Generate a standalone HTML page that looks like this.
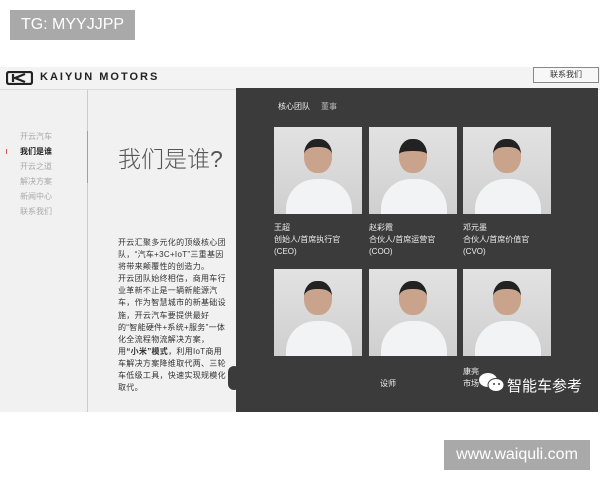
<!DOCTYPE html>
<html><head><meta charset="utf-8"><style>
*{margin:0;padding:0;box-sizing:border-box}
body{width:600px;height:480px;background:#fff;position:relative;overflow:hidden;font-family:"Liberation Sans","Noto Sans CJK SC",sans-serif}
.a{position:absolute}
.tg{left:10px;top:10px;width:125px;height:30px;background:#a9a9a9;color:#fff;font-size:16px;line-height:30px;text-align:center}
.wm{left:444px;top:440px;width:146px;height:30px;background:#a9a9a9;color:#fff;font-size:16px;line-height:30px;text-align:center}
.hdr{left:0;top:67px;width:600px;height:23px;background:#f3f3f3;border-bottom:1px solid #ddd}
.main{left:0;top:90px;width:236px;height:322px;background:#f1f1f1}
.dark{left:236px;top:88px;width:362px;height:324px;background:#3b3b3b}
.nav{left:20px;font-size:8px;color:#aaa}
.ph{width:88px;height:87px;background:linear-gradient(#e2e2e2,#cfcfcf);overflow:hidden}
.ph .h{position:absolute;left:30px;top:12px;width:28px;height:34px;border-radius:45%;background:#c9a38c;border-top:8px solid #222}
.ph .s{position:absolute;left:12px;top:52px;width:66px;height:45px;border-radius:30px 30px 0 0;background:#f2f3f4}
.t{font-size:8px;color:#eee;line-height:12px}
</style></head><body>
<div class="a tg">TG: MYYJJPP</div>
<div class="a hdr"></div>
<svg class="a" style="left:6px;top:71px" width="27" height="14" viewBox="0 0 27 14"><rect x="1" y="1" width="25" height="12" rx="2" fill="none" stroke="#222" stroke-width="2.2"/><path d="M7 3v8M19 3L9 7l10 4" fill="none" stroke="#222" stroke-width="2.2"/></svg>
<div class="a" style="left:40px;top:71px;font-size:11px;font-weight:bold;letter-spacing:2px;color:#222">KAIYUN MOTORS</div>
<div class="a" style="left:533px;top:67px;width:66px;height:16px;border:1px solid #888;background:#f7f7f7;font-size:8px;line-height:14px;text-align:center;color:#333">联系我们</div>
<div class="a main"></div>
<div class="a" style="left:87px;top:90px;width:1px;height:322px;background:#ccc"></div>
<div class="a" style="left:87px;top:131px;width:1px;height:52px;background:#d88"></div>
<div class="a nav" style="top:131px">开云汽车</div>
<div class="a nav" style="top:146px;color:#222;font-weight:bold">我们是谁</div>
<div class="a" style="left:6px;top:149px;width:1px;height:5px;background:#c55"></div>
<div class="a nav" style="top:161px">开云之道</div>
<div class="a nav" style="top:176px">解决方案</div>
<div class="a nav" style="top:191px">新闻中心</div>
<div class="a nav" style="top:206px">联系我们</div>
<div class="a" style="left:118px;top:140px;font-size:23px;color:#555;font-weight:300">我们是谁?</div>
<div class="a" style="left:118px;top:237px;width:110px;font-size:8px;line-height:12.1px;color:#333;letter-spacing:0.3px">开云汇聚多元化的顶级核心团队，“汽车+3C+IoT”三重基因将带来颠覆性的创造力。<br>开云团队始终相信，商用车行业革新不止是一辆新能源汽车，作为智慧城市的新基础设施，开云汽车要提供最好的“智能硬件+系统+服务”一体化全流程物流解决方案，用<b>“小米”模式</b>，利用IoT商用车解决方案降维取代两、三轮车低级工具，快速实现规模化取代。</div>
<div class="a dark"></div>
<div class="a t" style="left:278px;top:101px">核心团队</div>
<div class="a t" style="left:321px;top:101px;color:#bbb">董事</div>
<div class="a ph" style="left:274px;top:127px"><div class="s"></div><div class="h"></div></div>
<div class="a ph" style="left:369px;top:127px"><div class="s"></div><div class="h" style="border-top-width:12px"></div></div>
<div class="a ph" style="left:463px;top:127px"><div class="s"></div><div class="h"></div></div>
<div class="a t" style="left:274px;top:222px">王超<br>创始人/首席执行官<br>(CEO)</div>
<div class="a t" style="left:369px;top:222px">赵彩霞<br>合伙人/首席运营官<br>(COO)</div>
<div class="a t" style="left:463px;top:222px">邓元墨<br>合伙人/首席价值官<br>(CVO)</div>
<div class="a ph" style="left:274px;top:269px"><div class="s"></div><div class="h"></div></div>
<div class="a ph" style="left:369px;top:269px"><div class="s"></div><div class="h"></div></div>
<div class="a ph" style="left:463px;top:269px"><div class="s"></div><div class="h"></div></div>
<div class="a t" style="left:463px;top:366px">康亮<br>市场</div>
<div class="a t" style="left:380px;top:378px">设师</div>
<div class="a" style="left:228px;top:366px;width:12px;height:24px;border-radius:6px;background:#3b3b3b"></div>
<svg class="a" style="left:478px;top:371px" width="28" height="22" viewBox="0 0 28 22"><ellipse cx="10" cy="9" rx="9" ry="7" fill="#fff"/><ellipse cx="18" cy="14" rx="8" ry="6.5" fill="#fff" stroke="#3b3b3b" stroke-width="1"/><circle cx="16" cy="13" r="1" fill="#3b3b3b"/><circle cx="21" cy="13" r="1" fill="#3b3b3b"/></svg>
<div class="a" style="left:507px;top:375px;font-size:15px;color:#fff">智能车参考</div>
<div class="a wm">www.waiquli.com</div>
</body></html>
